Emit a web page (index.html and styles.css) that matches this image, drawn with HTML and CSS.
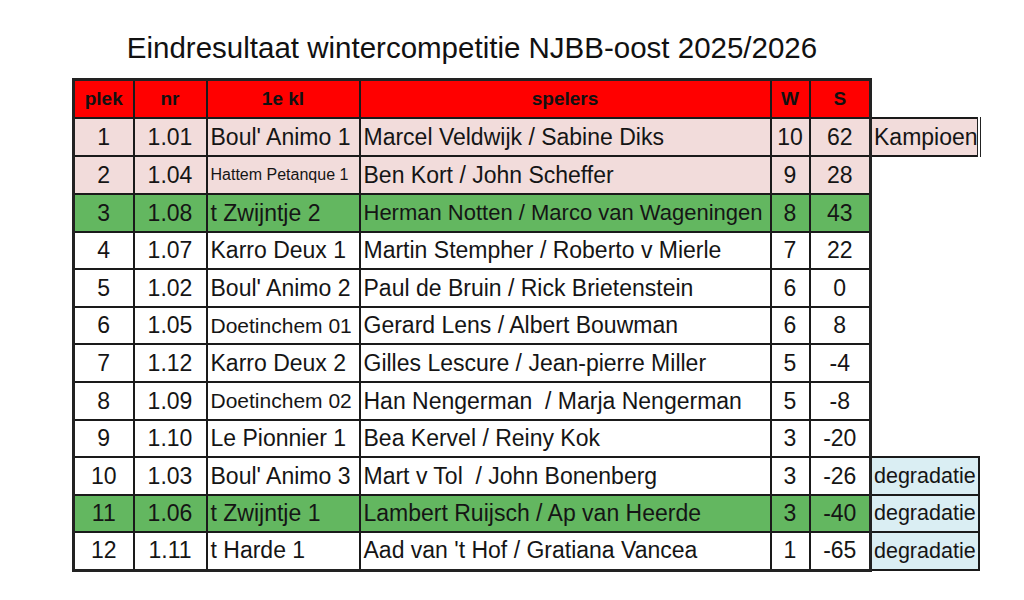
FILE: index.html
```html
<!DOCTYPE html>
<html lang="nl">
<head>
<meta charset="utf-8">
<title>Eindresultaat wintercompetitie NJBB-oost 2025/2026</title>
<link rel="stylesheet" href="styles.css">
</head>
<body>
<div class="page">
  <h1 class="title">Eindresultaat wintercompetitie NJBB-oost 2025/2026</h1>
  <table class="results">
    <colgroup>
      <col class="c-plek"><col class="c-nr"><col class="c-team"><col class="c-players"><col class="c-w"><col class="c-s"><col class="c-note">
    </colgroup>
    <thead>
      <tr>
        <th class="first">plek</th><th>nr</th><th>1e kl</th><th>spelers</th><th>W</th><th class="last">S</th><th class="note-head"></th>
      </tr>
    </thead>
    <tbody>
      <tr class="pink"><td class="first">1</td><td>1.01</td><td class="txt">Boul' Animo 1</td><td class="txt">Marcel Veldwijk / Sabine Diks</td><td>10</td><td class="last">62</td><td class="note champ">Kampioen</td></tr>
      <tr class="pink"><td class="first">2</td><td>1.04</td><td class="txt small">Hattem Petanque 1</td><td class="txt">Ben Kort / John Scheffer</td><td>9</td><td class="last">28</td><td class="empty"></td></tr>
      <tr class="green"><td class="first">3</td><td>1.08</td><td class="txt">t Zwijntje 2</td><td class="txt tight">Herman Notten / Marco van Wageningen</td><td>8</td><td class="last">43</td><td class="empty"></td></tr>
      <tr class="short"><td class="first">4</td><td>1.07</td><td class="txt">Karro Deux 1</td><td class="txt">Martin Stempher / Roberto v Mierle</td><td>7</td><td class="last">22</td><td class="empty"></td></tr>
      <tr><td class="first">5</td><td>1.02</td><td class="txt">Boul' Animo 2</td><td class="txt">Paul de Bruin / Rick Brietenstein</td><td>6</td><td class="last">0</td><td class="empty"></td></tr>
      <tr class="short"><td class="first">6</td><td>1.05</td><td class="txt mid">Doetinchem 01</td><td class="txt">Gerard Lens / Albert Bouwman</td><td>6</td><td class="last">8</td><td class="empty"></td></tr>
      <tr><td class="first">7</td><td>1.12</td><td class="txt">Karro Deux 2</td><td class="txt">Gilles Lescure / Jean-pierre Miller</td><td>5</td><td class="last">-4</td><td class="empty"></td></tr>
      <tr><td class="first">8</td><td>1.09</td><td class="txt mid">Doetinchem 02</td><td class="txt">Han Nengerman&nbsp; / Marja Nengerman</td><td>5</td><td class="last">-8</td><td class="empty"></td></tr>
      <tr class="short"><td class="first">9</td><td>1.10</td><td class="txt">Le Pionnier 1</td><td class="txt">Bea Kervel / Reiny Kok</td><td>3</td><td class="last">-20</td><td class="empty"></td></tr>
      <tr><td class="first">10</td><td>1.03</td><td class="txt">Boul' Animo 3</td><td class="txt">Mart v Tol&nbsp; / John Bonenberg</td><td>3</td><td class="last">-26</td><td class="note degr">degradatie</td></tr>
      <tr class="green short"><td class="first">11</td><td>1.06</td><td class="txt">t Zwijntje 1</td><td class="txt">Lambert Ruijsch / Ap van Heerde</td><td>3</td><td class="last">-40</td><td class="note degr">degradatie</td></tr>
      <tr class="bottom"><td class="first">12</td><td>1.11</td><td class="txt">t Harde 1</td><td class="txt">Aad van 't Hof / Gratiana Vancea</td><td>1</td><td class="last">-65</td><td class="note degr">degradatie</td></tr>
    </tbody>
  </table>
</div>
</body>
</html>
```

FILE: styles.css
```css
html, body {
  margin: 0;
  padding: 0;
  background: #ffffff;
}

body {
  font-family: "Liberation Sans", Arial, sans-serif;
  color: #151515;
}

.page {
  padding: 31px 0 0 72px;
}

.title {
  width: 800px;
  margin: 0 0 13px 0;
  text-align: center;
  font-weight: normal;
  font-size: 29.5px;
  line-height: 34px;
  color: #111;
}

.results {
  border-collapse: collapse;
  table-layout: fixed;
  width: 905px;
  font-size: 23px;
}

.c-plek { width: 60px; }
.c-nr { width: 73px; }
.c-team { width: 153px; }
.c-players { width: 411px; }
.c-w { width: 39px; }
.c-s { width: 61px; }
.c-note { width: 108px; }

.results th,
.results td {
  border: 2px solid #1a1a1a;
  padding: 0;
  text-align: center;
  vertical-align: middle;
  white-space: nowrap;
  overflow: hidden;
}

.results th {
  background: #ff0000;
  font-size: 19px;
  font-weight: bold;
  color: #111;
  height: 36px;
  border-top: 3px solid #222;
}

.results tbody tr { height: 38px; }
.results tbody tr.short { height: 37px; }

.results .first { border-left: 3px solid #222; }
.results .last { border-right: 3px solid #222; }
.results tr.bottom td { border-bottom: 3px solid #222; }

.results .txt {
  text-align: left;
  padding-left: 3px;
}

.results .small { font-size: 16px; }
.results .mid { font-size: 21px; }
.results .tight { font-size: 22px; }

.pink td { background: #f2dcdb; }
.green td { background: #63b760; }

.results th.note-head,
.results td.empty {
  background: transparent;
  border-top: none;
  border-right: none;
  border-bottom: none;
}

.results td.note {
  text-align: left;
  padding-left: 2px;
}

.results td.champ {
  background: #f2dcdb;
  border-right: 4px double #222;
}

.results td.degr {
  background: #daeef3;
  font-size: 21.5px;
}

.results tr.bottom td.degr { border-bottom: 2px solid #1a1a1a; }
```
